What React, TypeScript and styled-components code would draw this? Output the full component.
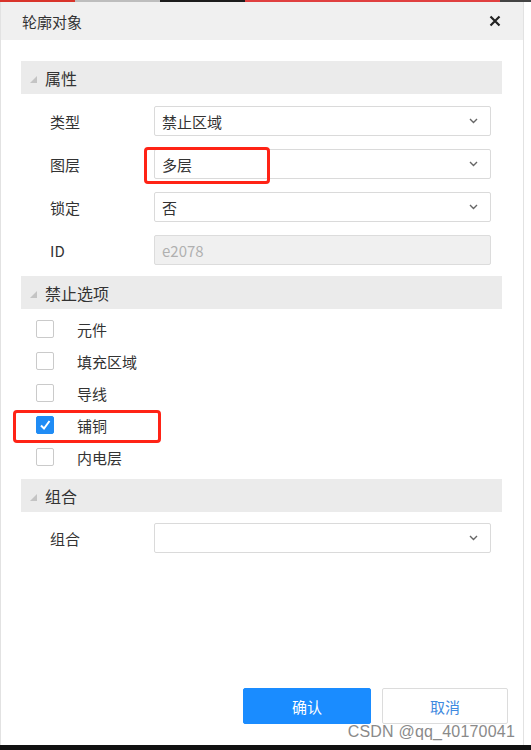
import React, { useState } from 'react';
import styled, { createGlobalStyle } from 'styled-components';

const GlobalStyle = createGlobalStyle`
    html, body {
        margin: 0;
        padding: 0;
        background: #ffffff;
    }
    * {
        box-sizing: border-box;
    }
`;

const Frame = styled.div`
    position: relative;
    width: 531px;
    height: 750px;
    overflow: hidden;
    display: flex;
    flex-direction: column;
    background: #ffffff;
    font-family: "Noto Sans CJK SC", "Liberation Sans", sans-serif;
    color: #333;
`;

const TopStrip = styled.div`
    height: 2px;
    background: linear-gradient(
        to right,
        #d9342b 0 75px,
        #bdbdbd 75px 160px,
        #1c1c1c 160px 245px,
        #e04040 245px 500px,
        #444 500px
    );
`;

const BottomStrip = styled.div`
    height: 5px;
    background: #111;
`;

const Dialog = styled.div`
    flex: 1;
    width: 524px;
    display: flex;
    flex-direction: column;
    border-left: 1px solid #e2e2e2;
    border-right: 1px solid #e2e2e2;
    background: #fff;
`;

const TitleBar = styled.div`
    height: 38px;
    display: flex;
    align-items: center;
    justify-content: space-between;
    padding: 0 20px 0 21px;
    background: #f0f0f0;
    font-size: 15px;
    color: #333;
`;

const CloseButton = styled.div`
    width: 16px;
    height: 16px;
    display: flex;
    align-items: center;
    justify-content: center;
    cursor: pointer;
`;

const Body = styled.div`
    flex: 1;
    padding: 21px 21px 0 20px;
    display: flex;
    flex-direction: column;
`;

const SectionHeader = styled.div`
    height: 33px;
    display: flex;
    align-items: center;
    gap: 8px;
    padding-left: 9px;
    background: #ebebeb;
    font-size: 16px;
    color: #333;
`;

const Corner = styled.span`
    width: 0;
    height: 0;
    border-left: 7px solid transparent;
    border-bottom: 7px solid #c4c4c4;
    margin-top: 3px;
`;

const FormList = styled.div<{ $top: number; $bottom: number }>`
    display: flex;
    flex-direction: column;
    gap: 13px;
    padding: ${p => p.$top}px 0 ${p => p.$bottom}px;
`;

const FormRow = styled.div`
    display: flex;
    align-items: center;
    height: 30px;
`;

const Label = styled.div`
    width: 133px;
    padding-left: 29px;
    font-size: 15px;
    color: #333;
`;

const Field = styled.div<{ $disabled?: boolean }>`
    position: relative;
    width: 337px;
    height: 30px;
    display: flex;
    align-items: center;
    justify-content: space-between;
    padding: 0 12px 0 7px;
    border: 1px solid ${p => (p.$disabled ? '#dcdcdc' : '#dadada')};
    border-radius: 2px;
    background: ${p => (p.$disabled ? '#f0f0f0' : '#fff')};
    font-size: 15px;
    color: ${p => (p.$disabled ? '#b0b0b0' : '#333')};
`;

const Highlight = styled.div<{ $l: number; $t: number; $w: number; $h: number }>`
    position: absolute;
    left: ${p => p.$l}px;
    top: ${p => p.$t}px;
    width: ${p => p.$w}px;
    height: ${p => p.$h}px;
    border: 3px solid #ff2316;
    border-radius: 4px;
    pointer-events: none;
`;

const CheckList = styled.div`
    display: flex;
    flex-direction: column;
    padding: 4px 0 6px;
`;

const CheckRow = styled.label`
    position: relative;
    height: 32px;
    display: flex;
    align-items: center;
    padding-left: 15px;
    font-size: 15px;
    color: #333;
    cursor: pointer;
`;

const Box = styled.span<{ $checked: boolean }>`
    width: 18px;
    height: 18px;
    margin-right: 23px;
    display: flex;
    align-items: center;
    justify-content: center;
    border: 1px solid ${p => (p.$checked ? '#1f8cf5' : '#cacaca')};
    border-radius: 2px;
    background: ${p => (p.$checked ? '#1f8cf5' : '#fff')};
`;

const Footer = styled.div`
    display: flex;
    justify-content: flex-end;
    gap: 11px;
    padding: 0 15px 21px 0;
`;

const Button = styled.button<{ $primary?: boolean }>`
    width: ${p => (p.$primary ? 128 : 126)}px;
    height: 36px;
    border-radius: 2px;
    border: 1px solid ${p => (p.$primary ? '#1a8cff' : '#dcdcdc')};
    background: ${p => (p.$primary ? '#1a8cff' : '#fff')};
    color: ${p => (p.$primary ? '#fff' : '#3f8ae0')};
    font-family: "Noto Sans CJK SC", sans-serif;
    font-size: 15px;
    cursor: pointer;
`;

const Watermark = styled.div`
    position: absolute;
    right: 16px;
    bottom: 9px;
    font-family: "Liberation Sans", Arial, sans-serif;
    font-size: 16px;
    color: #8a8a8a;
    letter-spacing: 0.2px;
    pointer-events: none;
`;

const Chevron = () => (
    <svg width="9" height="6" viewBox="0 0 9 6">
        <path d="M1 1 L4.5 4.5 L8 1" fill="none" stroke="#666" strokeWidth="1.4" />
    </svg>
);

const Tick = () => (
    <svg width="12" height="12" viewBox="0 0 12 12">
        <path d="M2 6.5 L5 9.5 L10.5 2" fill="none" stroke="#fff" strokeWidth="2" />
    </svg>
);

const options = ['元件', '填充区域', '导线', '铺铜', '内电层'];

const App: React.FC = () => {
    const [checked, setChecked] = useState<string[]>(['铺铜']);

    const toggle = (name: string) => {
        setChecked(prev => (prev.includes(name) ? prev.filter(n => n !== name) : [...prev, name]));
    };

    return (
        <Frame>
            <GlobalStyle />
            <TopStrip />
            <Dialog>
                <TitleBar>
                    <span>轮廓对象</span>
                    <CloseButton>
                        <svg width="12" height="12" viewBox="0 0 12 12">
                            <path d="M1.5 1.5 L10.5 10.5 M10.5 1.5 L1.5 10.5" stroke="#222" strokeWidth="2.2" />
                        </svg>
                    </CloseButton>
                </TitleBar>
                <Body>
                    <SectionHeader>
                        <Corner />
                        属性
                    </SectionHeader>
                    <FormList $top={12} $bottom={11}>
                        <FormRow>
                            <Label>类型</Label>
                            <Field>
                                禁止区域
                                <Chevron />
                            </Field>
                        </FormRow>
                        <FormRow>
                            <Label>图层</Label>
                            <Field>
                                多层
                                <Chevron />
                                <Highlight $l={-11} $t={-3} $w={126} $h={37} />
                            </Field>
                        </FormRow>
                        <FormRow>
                            <Label>锁定</Label>
                            <Field>
                                否
                                <Chevron />
                            </Field>
                        </FormRow>
                        <FormRow>
                            <Label>ID</Label>
                            <Field $disabled>e2078</Field>
                        </FormRow>
                    </FormList>

                    <SectionHeader>
                        <Corner />
                        禁止选项
                    </SectionHeader>
                    <CheckList>
                        {options.map(name => {
                            const on = checked.includes(name);
                            return (
                                <CheckRow key={name} onClick={() => toggle(name)}>
                                    <Box $checked={on}>{on && <Tick />}</Box>
                                    {name}
                                    {name === '铺铜' && <Highlight $l={-8} $t={1} $w={148} $h={33} />}
                                </CheckRow>
                            );
                        })}
                    </CheckList>

                    <SectionHeader>
                        <Corner />
                        组合
                    </SectionHeader>
                    <FormList $top={11} $bottom={0}>
                        <FormRow>
                            <Label>组合</Label>
                            <Field>
                                <span />
                                <Chevron />
                            </Field>
                        </FormRow>
                    </FormList>
                </Body>
                <Footer>
                    <Button $primary>确认</Button>
                    <Button>取消</Button>
                </Footer>
            </Dialog>
            <BottomStrip />
            <Watermark>CSDN @qq_40170041</Watermark>
        </Frame>
    );
};

export default App;
